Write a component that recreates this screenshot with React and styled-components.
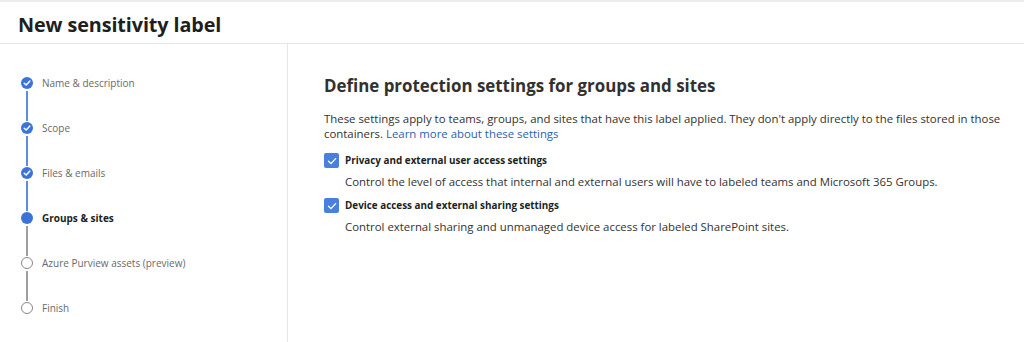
import React from "react";
import styled, { createGlobalStyle } from "styled-components";

const GlobalStyle = createGlobalStyle`
  html, body {
    margin: 0;
    padding: 0;
    background: #ffffff;
  }
  body {
    font-family: "Segoe UI", "Open Sans", "Noto Sans", sans-serif;
    color: #323130;
  }
`;

const Page = styled.div`
  width: 1024px;
  height: 342px;
  display: flex;
  flex-direction: column;
  border-top: 2px solid #ececec;
  box-sizing: border-box;
  overflow: hidden;
`;

const Header = styled.header`
  height: 41px;
  flex-shrink: 0;
  display: flex;
  align-items: center;
  padding-left: 18px;
  border-bottom: 1px solid #e6e6e6;
`;

const Title = styled.h1`
  margin: 0 0 -3px;
  font-size: 19.8px;
  font-weight: 700;
  color: #201f1e;
  letter-spacing: -0.1px;
`;

const Body = styled.div`
  flex: 1;
  display: flex;
`;

const Nav = styled.nav`
  width: 288px;
  flex-shrink: 0;
  border-right: 1px solid #e6e6e6;
  padding: 33px 0 0 21px;
  box-sizing: border-box;
  display: flex;
  flex-direction: column;
`;

const Step = styled.div`
  display: flex;
  gap: 9px;
  height: ${(p) => (p.$last ? "14px" : "45px")};
`;

const Rail = styled.div`
  width: 12px;
  display: flex;
  flex-direction: column;
  align-items: center;
`;

const Dot = styled.div`
  width: 12px;
  height: 12px;
  border-radius: 50%;
  box-sizing: border-box;
  flex-shrink: 0;
  display: flex;
  align-items: center;
  justify-content: center;
  background: ${(p) => (p.$state === "todo" ? "#ffffff" : "#3b74d9")};
  border: ${(p) => (p.$state === "todo" ? "1.5px solid #8a8886" : "none")};
`;

const Connector = styled.div`
  width: 2px;
  flex: 1;
  margin: 2px 0 1px;
  background: ${(p) => (p.$done ? "#5b8ce2" : "#a19f9d")};
`;

const StepLabel = styled.span`
  font-size: 10px;
  line-height: 12px;
  color: ${(p) => (p.$active ? "#201f1e" : "#6b6967")};
  font-weight: ${(p) => (p.$active ? 700 : 400)};
  white-space: nowrap;
`;

const Main = styled.main`
  flex: 1;
  padding: 30px 0 0 36px;
`;

const Heading = styled.h2`
  margin: 0 0 13px;
  font-size: 16.9px;
  line-height: 24px;
  font-weight: 700;
  color: #323130;
`;

const Intro = styled.p`
  margin: 0 0 12px;
  font-size: 11.4px;
  line-height: 15px;
  color: #323130;
  max-width: 680px;
`;

const LearnLink = styled.a`
  color: #2a5fae;
  text-decoration: none;
`;

const Option = styled.div`
  display: grid;
  grid-template-columns: 15px 1fr;
  column-gap: 6px;
  row-gap: 6px;
  align-items: center;
  margin-bottom: 9px;
`;

const Box = styled.div`
  width: 15px;
  height: 15px;
  border-radius: 2px;
  background: #4a80dd;
  display: flex;
  align-items: center;
  justify-content: center;
`;

const OptionTitle = styled.span`
  font-size: 9.9px;
  line-height: 15px;
  font-weight: 700;
  color: #201f1e;
`;

const OptionText = styled.span`
  grid-column: 2;
  font-size: 11.4px;
  line-height: 15px;
  color: #323130;
`;

const Check = ({ size = 8, stroke = 1.6 }) => (
  <svg width={size} height={size} viewBox="0 0 10 10" fill="none">
    <path
      d="M1.5 5.2 L4 7.6 L8.6 2.6"
      stroke="#ffffff"
      strokeWidth={stroke}
      strokeLinecap="round"
      strokeLinejoin="round"
    />
  </svg>
);

const steps = [
  { label: "Name & description", state: "done" },
  { label: "Scope", state: "done" },
  { label: "Files & emails", state: "done" },
  { label: "Groups & sites", state: "active" },
  { label: "Azure Purview assets (preview)", state: "todo" },
  { label: "Finish", state: "todo" },
];

const options = [
  {
    title: "Privacy and external user access settings",
    text: "Control the level of access that internal and external users will have to labeled teams and Microsoft 365 Groups.",
  },
  {
    title: "Device access and external sharing settings",
    text: "Control external sharing and unmanaged device access for labeled SharePoint sites.",
  },
];

export default function App() {
  return (
    <>
      <GlobalStyle />
      <Page>
        <Header>
          <Title>New sensitivity label</Title>
        </Header>
        <Body>
          <Nav>
            {steps.map((s, i) => {
              const last = i === steps.length - 1;
              return (
                <Step key={s.label} $last={last}>
                  <Rail>
                    <Dot $state={s.state}>
                      {s.state === "done" && <Check size={8} stroke={1.8} />}
                    </Dot>
                    {!last && <Connector $done={s.state === "done"} />}
                  </Rail>
                  <StepLabel $active={s.state === "active"}>{s.label}</StepLabel>
                </Step>
              );
            })}
          </Nav>
          <Main>
            <Heading>Define protection settings for groups and sites</Heading>
            <Intro>
              These settings apply to teams, groups, and sites that have this label applied. They
              don't apply directly to the files stored in those containers.{" "}
              <LearnLink href="#">Learn more about these settings</LearnLink>
            </Intro>
            {options.map((o) => (
              <Option key={o.title}>
                <Box>
                  <Check size={10} stroke={1.3} />
                </Box>
                <OptionTitle>{o.title}</OptionTitle>
                <OptionText>{o.text}</OptionText>
              </Option>
            ))}
          </Main>
        </Body>
      </Page>
    </>
  );
}
